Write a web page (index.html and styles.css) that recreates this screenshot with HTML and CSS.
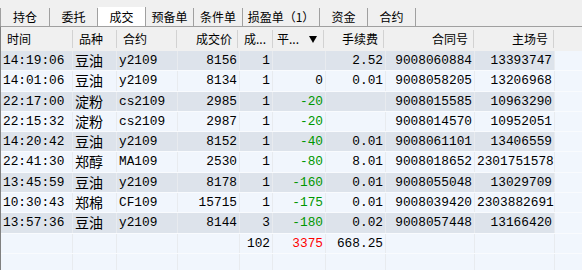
FILE: index.html
```html
<!DOCTYPE html>
<html lang="zh-CN">
<head>
    <meta charset="UTF-8">
    <title>成交</title>
    <link rel="stylesheet" href="styles.css">
</head>
<body>
    <div class="tabs">
        <div class="tab first">持仓</div>
        <div class="tab">委托</div>
        <div class="tab active">成交</div>
        <div class="tab">预备单</div>
        <div class="tab w49">条件单</div>
        <div class="tab wide">损盈单（1）</div>
        <div class="tab">资金</div>
        <div class="tab">合约</div>
    </div>

    <div class="head">
        <div class="h">时间</div>
        <div class="h">品种</div>
        <div class="h">合约</div>
        <div class="h r">成交价</div>
        <div class="h">成...</div>
        <div class="h sort">平... <svg width="8" height="7" viewBox="0 0 8 7"><path d="M0 0H8L4 7Z" fill="#000"/></svg></div>
        <div class="h r">手续费</div>
        <div class="h r">合同号</div>
        <div class="h r">主场号</div>
    </div>

    <div class="list">
        <div class="row alt">
            <div class="c">14:19:06</div><div class="c cn">豆油</div><div class="c">y2109</div><div class="c n">8156</div><div class="c n">1</div><div class="c n"></div><div class="c n">2.52</div><div class="c n">9008060884</div><div class="c n">13393747</div>
        </div>
        <div class="row">
            <div class="c">14:01:06</div><div class="c cn">豆油</div><div class="c">y2109</div><div class="c n">8134</div><div class="c n">1</div><div class="c n">0</div><div class="c n">0.01</div><div class="c n">9008058205</div><div class="c n">13206968</div>
        </div>
        <div class="row alt">
            <div class="c">22:17:00</div><div class="c cn">淀粉</div><div class="c">cs2109</div><div class="c n">2985</div><div class="c n">1</div><div class="c n g">-20</div><div class="c n"></div><div class="c n">9008015585</div><div class="c n">10963290</div>
        </div>
        <div class="row">
            <div class="c">22:15:32</div><div class="c cn">淀粉</div><div class="c">cs2109</div><div class="c n">2987</div><div class="c n">1</div><div class="c n g">-20</div><div class="c n"></div><div class="c n">9008014570</div><div class="c n">10952051</div>
        </div>
        <div class="row alt">
            <div class="c">14:20:42</div><div class="c cn">豆油</div><div class="c">y2109</div><div class="c n">8152</div><div class="c n">1</div><div class="c n g">-40</div><div class="c n">0.01</div><div class="c n">9008061101</div><div class="c n">13406559</div>
        </div>
        <div class="row">
            <div class="c">22:41:30</div><div class="c cn">郑醇</div><div class="c">MA109</div><div class="c n">2530</div><div class="c n">1</div><div class="c n g">-80</div><div class="c n">8.01</div><div class="c n">9008018652</div><div class="c n">2301751578</div>
        </div>
        <div class="row alt">
            <div class="c">13:45:59</div><div class="c cn">豆油</div><div class="c">y2109</div><div class="c n">8178</div><div class="c n">1</div><div class="c n g">-160</div><div class="c n">0.01</div><div class="c n">9008055048</div><div class="c n">13029709</div>
        </div>
        <div class="row">
            <div class="c">10:30:43</div><div class="c cn">郑棉</div><div class="c">CF109</div><div class="c n">15715</div><div class="c n">1</div><div class="c n g">-175</div><div class="c n">0.01</div><div class="c n">9008039420</div><div class="c n">2303882691</div>
        </div>
        <div class="row alt">
            <div class="c">13:57:36</div><div class="c cn">豆油</div><div class="c">y2109</div><div class="c n">8144</div><div class="c n">3</div><div class="c n g">-180</div><div class="c n">0.02</div><div class="c n">9008057448</div><div class="c n">13166420</div>
        </div>
        <!-- 合计 -->
        <div class="row">
            <div class="c"></div><div class="c"></div><div class="c"></div><div class="c"></div><div class="c n">102</div><div class="c n red">3375</div><div class="c n">668.25</div><div class="c"></div><div class="c"></div>
        </div>
        <div class="row">
            <div class="c"></div><div class="c"></div><div class="c"></div><div class="c"></div><div class="c"></div><div class="c"></div><div class="c"></div><div class="c"></div><div class="c"></div>
        </div>
    </div>
</body>
</html>
```

FILE: styles.css
```css
* {
    margin: 0;
    padding: 0;
    box-sizing: border-box;
}
body {
    font-family: "Liberation Mono", "Noto Sans CJK SC", monospace;
    font-size: 12.8px;
    color: #000;
    background: #f0f0f0;
    width: 582px;
    height: 270px;
    overflow: hidden;
}
.tabs {
    display: flex;
    height: 26px;
    padding-top: 8px;
}
.tab {
    width: 48px;
    height: 18px;
    border-right: 1px solid #a0a0a0;
    font: 12px "Noto Sans CJK SC", sans-serif;
    line-height: 17px;
    text-align: center;
}
.tab.first {
    width: 50px;
    border-left: 1px solid #a0a0a0;
}
.tab.w49 {
    width: 49px;
}
.tab.wide {
    width: 77px;
}
.tab.active {
    background: #fff;
    height: 19px;
    margin-top: -1px;
    line-height: 19px;
}
.head {
    display: grid;
    grid-template-columns: 72px 44px 60px 61px 35px 51px 60px 90px 80px;
    height: 25px;
    border-top: 1px solid #a0a0a0;
    border-left: 1px solid #808080;
    background: #f0f0f0;
}
.h {
    margin: 3px 0;
    padding: 0 6px;
    border-right: 1px solid #d2d2d2;
    font: 12px "Noto Sans CJK SC", sans-serif;
    line-height: 18px;
    white-space: nowrap;
    overflow: hidden;
}
.h.r {
    text-align: right;
    padding-right: 5px;
}
.h.sort {
    display: flex;
    justify-content: space-between;
    align-items: center;
    padding: 0 6px 0 4px;
}
.list {
    border-left: 1px solid #808080;
    background: #f1f6fd;
    height: 219px;
}
.row {
    display: grid;
    grid-template-columns: 72px 44px 61px 62px 33px 53px 60px 89px 80px;
    height: 20.3px;
    border-bottom: 1px solid #f9fbfe;
}
.c {
    padding: 0 2px;
    border-right: 1px solid #e8ebef;
    line-height: 19.3px;
    white-space: nowrap;
}
.alt .c {
    background: #dde3eb;
}
.n {
    text-align: right;
}
.cn {
    font: 14px "Noto Sans CJK SC", sans-serif;
    line-height: 19.3px;
}
.g {
    color: #009600;
}
.red {
    color: #ff0000;
}
```
